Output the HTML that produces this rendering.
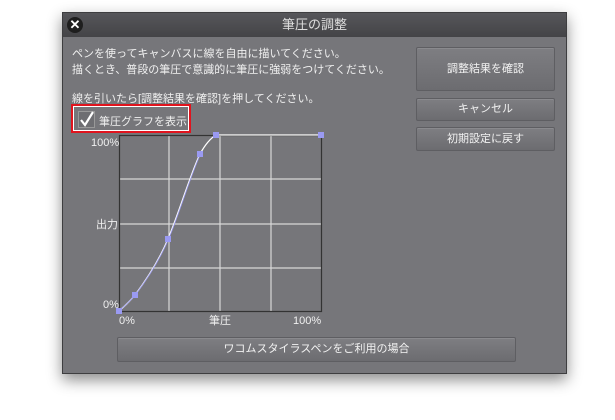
<!DOCTYPE html>
<html><head><meta charset="utf-8"><style>
*{margin:0;padding:0;box-sizing:border-box}
body{width:615px;height:420px;background:#fff;position:relative;overflow:hidden;font-family:"Liberation Sans","Noto Sans CJK JP",sans-serif;color:#eee}
.dlg{position:absolute;left:62px;top:12px;width:505px;height:362px;background:#76767a;border:1px solid #3e3e40;box-shadow:0 6px 14px rgba(0,0,0,.45)}
.title{position:absolute;left:0;top:0;width:100%;height:24px;background:linear-gradient(#56565a,#444447);text-align:center;font-size:13px;line-height:24px;color:#ddd}
.x{position:absolute;left:4px;top:4px;width:16px;height:16px;border-radius:50%;background:#1e1e1e;color:#fff;font-size:13px;line-height:16px;text-align:center;font-weight:bold}
.t{position:absolute;font-size:11px;color:#f0f0f0;white-space:nowrap}
.btn{position:absolute;background:linear-gradient(#7e7e82,#6c6c70);border:1px solid #5e5e62;border-radius:2px;text-align:center;font-size:11px;color:#f2f2f2;box-shadow:inset 0 1px 0 #8a8a8e}
.red{position:absolute;left:8px;top:91px;width:120px;height:29px;border:2px solid #e0141e;background:#fff}
.red .in{position:absolute;left:1px;top:1px;right:1px;bottom:1px;background:#76767a}
.cb{position:absolute;left:4px;top:4px;width:17px;height:17px;border:1px solid #999;background:#6e6e72}
</style></head><body>
<div class="dlg">
<div class="title">筆圧の調整</div>
<div class="x">✕</div>
<div class="t" style="left:9px;top:32px">ペンを使ってキャンバスに線を自由に描いてください。</div>
<div class="t" style="left:9px;top:48px">描くとき、普段の筆圧で意識的に筆圧に強弱をつけてください。</div>
<div class="t" style="left:9px;top:77px">線を引いたら[調整結果を確認]を押してください。</div>
<div class="red"><div class="in">
<div class="cb"><svg width="17" height="17" style="position:absolute;left:-1px;top:-1px"><path d="M3 9 L7 14 L15 1" stroke="#fff" stroke-width="2.2" fill="none"/></svg></div>
<div class="t" style="left:25px;top:6px">筆圧グラフを表示</div>
</div></div>
<div class="btn" style="left:353px;top:34px;width:139px;height:44px;line-height:42px">調整結果を確認</div>
<div class="btn" style="left:353px;top:85px;width:139px;height:23px;line-height:21px">キャンセル</div>
<div class="btn" style="left:353px;top:114px;width:139px;height:24px;line-height:22px">初期設定に戻す</div>
<div class="btn" style="left:54px;top:324px;width:399px;height:25px;line-height:23px">ワコムスタイラスペンをご利用の場合</div>
</div>
<svg width="615" height="420" style="position:absolute;left:0;top:0">
<g stroke="#d8d8d8" stroke-width="1.2">
<line x1="169" y1="135" x2="169" y2="311"/><line x1="220" y1="135" x2="220" y2="311"/><line x1="271" y1="135" x2="271" y2="311"/>
<line x1="119" y1="179" x2="322" y2="179"/><line x1="119" y1="224" x2="322" y2="224"/><line x1="119" y1="268" x2="322" y2="268"/>
</g>
<rect x="119.5" y="135.5" width="202" height="176" fill="none" stroke="#333" stroke-width="1.2"/>
<path d="M119 311 C127 304 131 300 135 295 C150 275 160 258 168 239 C180 210 190 175 200 154 C206 143 211 138 216 135 L321 135" fill="none" stroke="#fff" stroke-width="1.3"/>
<path d="M120 310 C128 303 132 299 136 294 C151 274 161 257 169 238 C181 209 191 174 201 153" fill="none" stroke="#9999ee" stroke-width="0.8"/>
<g fill="#9a9af2">
<rect x="116" y="308" width="6" height="6"/><rect x="132" y="292" width="6" height="6"/><rect x="165" y="236" width="6" height="6"/><rect x="197" y="151" width="6" height="6"/><rect x="213" y="132" width="6" height="6"/><rect x="318" y="132" width="6" height="6"/>
</g>
<g font-size="11" fill="#f0f0f0" font-family="Liberation Sans,Noto Sans CJK JP,sans-serif">
<text x="91" y="146">100%</text><text x="96" y="228">出力</text><text x="103" y="308">0%</text>
<text x="119" y="324">0%</text><text x="209" y="324">筆圧</text><text x="293" y="324">100%</text>
</g>
</svg>
</body></html>
